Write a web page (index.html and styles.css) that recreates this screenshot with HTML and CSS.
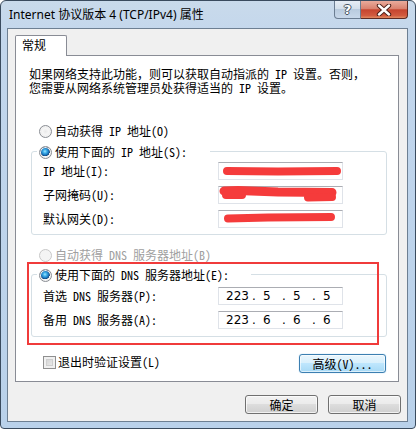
FILE: index.html
```
<!DOCTYPE html>
<html>
<head>
<meta charset="utf-8">
<link rel="stylesheet" href="styles.css">
</head>
<body>
<div class="window">
  <div class="titlebar">
    <span class="title">Internet 协议版本 4 (TCP/IPv4) 属性</span>
    <div class="caption-btns">
      <div class="cap-help">?</div>
      <div class="cap-close">
        <svg width="18" height="12" viewBox="0 0 18 12">
          <path d="M4 1.5 L14 10.5 M14 1.5 L4 10.5" stroke="#4a1d16" stroke-width="4.4" stroke-linecap="round"/>
          <path d="M4 1.5 L14 10.5 M14 1.5 L4 10.5" stroke="#ffffff" stroke-width="2.4" stroke-linecap="round"/>
        </svg>
      </div>
    </div>
  </div>
  <div class="client">
    <div class="tabs"><div class="tab">常规</div></div>
    <div class="panel">
      <p class="desc">如果网络支持此功能，则可以获取自动指派的 IP 设置。否则，<br>您需要从网络系统管理员处获得适当的 IP 设置。</p>
      <div class="opt"><span class="radio"></span><span>自动获得 IP 地址(O)</span></div>
      <div class="group group-ip">
        <div class="group-hdr hdr-ip"><span class="radio checked"></span><span>使用下面的 IP 地址(S):</span></div>
        <div class="field first"><span class="lbl">IP 地址(I):</span>
          <div class="edit">
            <svg class="scribble" width="125" height="18" viewBox="0 0 125 18"><path d="M9 9 L60 9.5 L119 9" stroke="#f53b3b" stroke-width="8" stroke-linecap="round" fill="none"/></svg>
          </div>
        </div>
        <div class="field"><span class="lbl">子网掩码(U):</span>
          <div class="edit">
            <svg class="scribble" width="125" height="18" viewBox="0 0 125 18"><path d="M6 5 L20 4.5 L60 6 L114 6.5" stroke="#f53b3b" stroke-width="9" stroke-linecap="round" fill="none"/><path d="M8 9 L24 9 M90 11.5 L114 11" stroke="#f53b3b" stroke-width="8" stroke-linecap="round" fill="none"/></svg>
          </div>
        </div>
        <div class="field"><span class="lbl">默认网关(D):</span>
          <div class="edit">
            <svg class="scribble" width="125" height="18" viewBox="0 0 125 18"><path d="M10 8.5 L50 7.5 L113 7" stroke="#f53b3b" stroke-width="8" stroke-linecap="round" fill="none"/></svg>
          </div>
        </div>
      </div>
      <div class="opt disabled"><span class="radio"></span><span>自动获得 DNS 服务器地址(B)</span></div>
      <div class="group group-dns">
        <div class="group-hdr hdr-dns"><span class="radio checked"></span><span>使用下面的 DNS 服务器地址(E):</span></div>
        <div class="field first"><span class="lbl">首选 DNS 服务器(P):</span>
          <div class="edit ip"><span class="f1">223</span><span class="dot">.</span><span class="f">5</span><span class="dot">.</span><span class="f">5</span><span class="dot">.</span><span class="f">5</span></div>
        </div>
        <div class="field"><span class="lbl">备用 DNS 服务器(A):</span>
          <div class="edit ip"><span class="f1">223</span><span class="dot">.</span><span class="f">6</span><span class="dot">.</span><span class="f">6</span><span class="dot">.</span><span class="f">6</span></div>
        </div>
      </div>
      <div class="bottom-row">
        <div class="check"><span class="checkbox"></span><span>退出时验证设置(L)</span></div>
        <button class="btn btn-hot">高级(V)...</button>
      </div>
      <div class="highlight"></div>
    </div>
    <div class="dlg-btns">
      <button class="btn btn-dlg">确定</button>
      <button class="btn btn-dlg">取消</button>
    </div>
  </div>
</div>
</body>
</html>
```
FILE: styles.css
```
* { box-sizing: border-box; }
html, body { margin: 0; padding: 0; }
body {
  width: 416px;
  height: 429px;
  background: #ffffff;
  overflow: hidden;
}
.window {
  width: 416px;
  height: 429px;
  border: 1px solid #3a4b5e;
  border-radius: 6px 6px 4px 4px;
  background: linear-gradient(to bottom, #c9daeb 0px, #c2d6ec 40px, #b9d1ea 100%);
  padding: 0 7px 6px 6px;
  display: flex;
  flex-direction: column;
}
.titlebar {
  height: 27px;
  display: flex;
  align-items: flex-start;
  justify-content: space-between;
  padding-left: 2px;
}
.title {
  font-family: "Noto Sans", "Noto Sans CJK SC", sans-serif;
  font-size: 12px;
  color: #000;
  line-height: 16px;
  margin-top: 6px;
}
.caption-btns {
  display: flex;
  height: 18px;
}
.cap-help {
  width: 27px;
  height: 18px;
  border: 1px solid #6b7d92;
  border-top: none;
  border-radius: 0 0 0 4px;
  background: linear-gradient(to bottom, #e6edf5 0%, #d3dfeb 45%, #b9cbde 50%, #c8d8ea 100%);
  color: #fff;
  font-family: "DejaVu Sans", sans-serif;
  font-weight: bold;
  font-size: 13px;
  line-height: 17px;
  text-align: center;
  text-shadow: 1px 0 0 #44525f, -1px 0 0 #44525f, 0 1px 0 #44525f, 0 -1px 0 #44525f;
}
.cap-close {
  width: 47px;
  height: 18px;
  border: 1px solid #5e2a22;
  border-left: none;
  border-top: none;
  border-radius: 0 0 4px 0;
  background: linear-gradient(to bottom, #e9ab9c 0%, #d9826f 45%, #c6452f 52%, #d25a3e 85%, #e18a62 100%);
  display: flex;
  align-items: center;
  justify-content: center;
}
.client {
  height: 394px;
  border: 1px solid #6d7f92;
  background: #f0f0f0;
  display: flex;
  flex-direction: column;
}
.tabs {
  padding: 6px 0 0 7px;
  height: 26px;
  display: flex;
}
.tab {
  position: relative;
  z-index: 1;
  width: 52px;
  height: 21px;
  border: 1px solid #898c95;
  border-bottom: none;
  border-radius: 2px 2px 0 0;
  background: #ffffff;
  font-family: "Noto Sans CJK SC", sans-serif;
  font-size: 12px;
  line-height: 18px;
  padding-left: 6px;
  color: #000;
}
.panel {
  position: relative;
  margin-left: 7px;
  width: 384px;
  height: 327px;
  border: 1px solid #898c95;
  background: #ffffff;
  font-family: "Noto Sans Mono CJK SC", "Noto Sans CJK SC", monospace;
  font-size: 12px;
  color: #000;
  display: flex;
  flex-direction: column;
}
.desc {
  margin: 11px 0 0 13px;
  line-height: 14px;
  white-space: nowrap;
}
.opt {
  margin-top: 28px;
  height: 16px;
  padding-left: 23px;
  display: flex;
  align-items: center;
  gap: 3px;
  line-height: 16px;
}
.opt.disabled {
  margin-top: 12px;
  color: #a0a0a0;
}
.radio {
  width: 13px;
  height: 13px;
  border-radius: 50%;
  border: 1px solid #8a8d93;
  background: radial-gradient(circle at 50% 50%, #e9e9e9 0, #f6f6f6 40%, #dcdcdc 100%);
  flex: none;
  display: inline-block;
  box-shadow: inset 0 0 0 1px #f3f3f3;
}
.radio.checked {
  background:
    radial-gradient(circle at 45% 40%, #9ee6ff 0, #3fb0ea 20%, #1870b8 42%, #0e3f73 52%, #f4f4f4 56%, #dadada 100%);
}
.opt.disabled .radio {
  border-color: #c8c8c8;
  background: #f4f4f4;
  box-shadow: none;
}
.group {
  margin: 12px 0 0 15px;
  width: 356px;
  border: 1px solid #d5dfe5;
  border-radius: 3px;
  padding-bottom: 6px;
}
.group-dns {
  margin-top: 11px;
  padding-bottom: 7px;
}
.group-hdr {
  margin-top: -8px;
  margin-left: 5px;
  padding-left: 2px;
  height: 16px;
  background: #ffffff;
  display: flex;
  align-items: center;
  gap: 3px;
  line-height: 16px;
}
.hdr-ip { width: 173px; }
.hdr-dns { width: 214px; }
.field {
  display: flex;
  align-items: center;
  height: 18px;
  margin-top: 6px;
  padding-left: 11px;
}
.field.first { margin-top: 2px; }
.group-dns .field.first { margin-top: 4px; }
.lbl {
  line-height: 16px;
  white-space: nowrap;
}
.edit {
  position: relative;
  margin-left: auto;
  margin-right: 43px;
  width: 125px;
  height: 18px;
  border: 1px solid #dfe3e9;
  border-top-color: #abadb3;
  background: #fff;
}
.scribble {
  position: absolute;
  left: -1px;
  top: -1px;
}
.edit.ip {
  display: flex;
  align-items: center;
  padding-left: 7px;
  font-family: "DejaVu Sans", sans-serif;
  font-size: 12px;
  line-height: 16px;
  color: #000;
}
.f1 { width: 24px; }
.dot { width: 8px; text-align: center; }
.f { width: 22px; padding-left: 5px; }
.bottom-row {
  margin-top: 17px;
  display: flex;
  justify-content: space-between;
  align-items: flex-start;
  padding: 0 12px 0 27px;
}
.check {
  display: flex;
  align-items: center;
  gap: 2px;
  height: 16px;
  line-height: 16px;
}
.checkbox {
  width: 13px;
  height: 13px;
  border: 1px solid #8f8f8f;
  box-shadow: inset 0 0 0 2px #f0f0f0, inset 0 0 0 3px #cfcfcf;
  flex: none;
  background-image: linear-gradient(135deg, #cbcbcb, #f3f3f3);
}
.btn {
  font-family: "Noto Sans CJK SC", sans-serif;
  font-size: 12px;
  color: #000;
  height: 19px;
  padding: 0;
  line-height: 17px;
  border: 1px solid #707070;
  border-radius: 3px;
  background: linear-gradient(to bottom, #f2f2f2 0%, #ebebeb 45%, #dddddd 50%, #cfcfcf 100%);
  box-shadow: inset 0 0 0 1px rgba(255,255,255,0.7);
}
.btn-hot {
  width: 87px;
  border-color: #3c7fb1;
  background: linear-gradient(to bottom, #eaf6fd 0%, #d9f0fc 45%, #bee6fd 50%, #a7d9f5 100%);
  box-shadow: inset 0 0 0 1px rgba(255,255,255,0.6), 0 0 1px #6fb7e8;
  font-family: "Noto Sans Mono CJK SC", "Noto Sans CJK SC", monospace;
}
.highlight {
  position: absolute;
  left: 11px;
  top: 206px;
  width: 352px;
  height: 83px;
  border: 2px solid #f03b3b;
}
.dlg-btns {
  margin-top: 13px;
  display: flex;
  justify-content: flex-end;
  gap: 10px;
  padding-right: 6px;
}
.btn-dlg {
  width: 73px;
}
```
